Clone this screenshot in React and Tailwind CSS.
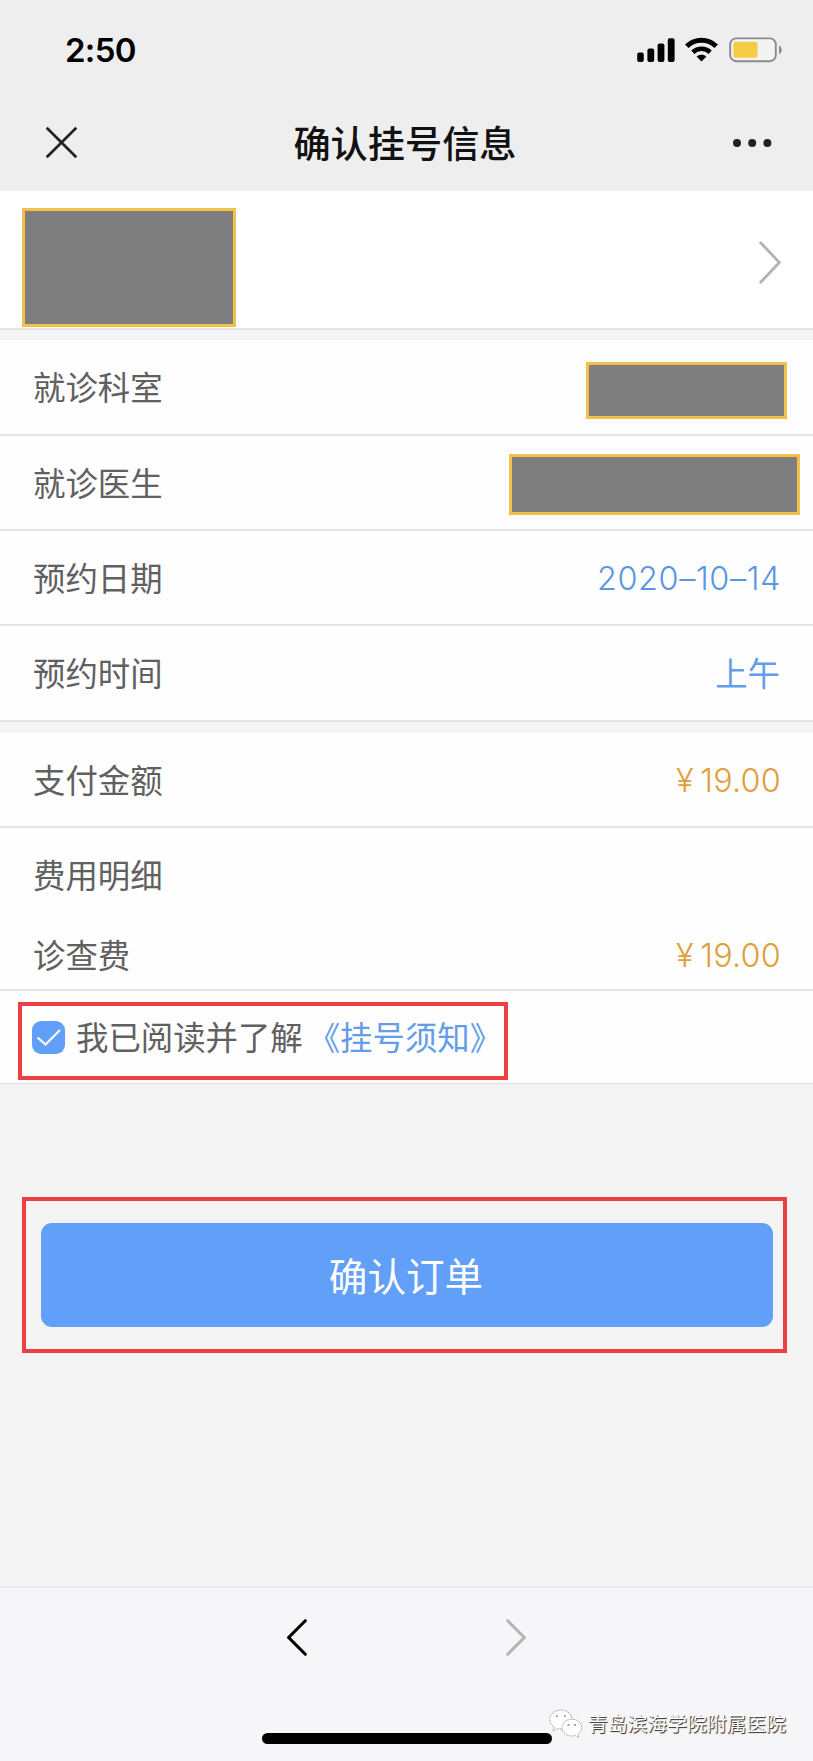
import clsx from "clsx";

// ===== Status Bar =====
const StatusBar = () => (
    <div className="h-[95px] flex items-start justify-between pl-[65px] pr-[31px] pt-[37px]">
        <span className="text-[33px] leading-[26px] font-semibold tracking-[-0.7px] text-black">2:50</span>
        <div className="flex items-start">
            <svg width="38" height="26" viewBox="0 0 38 26" fill="#000">
                <rect x="0.2" y="15.4" width="6.6" height="9.6" rx="2" />
                <rect x="10.4" y="11.4" width="6.8" height="13.6" rx="2" />
                <rect x="20.6" y="6.4" width="6.8" height="18.6" rx="2" />
                <rect x="30.8" y="1.2" width="6.8" height="23.8" rx="2" />
            </svg>
            <svg className="ml-[10px]" width="33" height="26" viewBox="0 0 33 26" fill="none" stroke="#000">
                <path d="M1.8 9.2C10 1.3 23 1.3 31.2 9.2" strokeWidth="5" />
                <path d="M7.8 15.2C12.8 10.6 20.2 10.6 25.2 15.2" strokeWidth="4.6" />
                <path d="M16.5 24.6L11.6 19.6C14.3 17.1 18.7 17.1 21.4 19.6Z" fill="#000" stroke="none" />
            </svg>
            <svg className="ml-[11px]" width="53" height="26" viewBox="0 0 53 26">
                <rect x="1.2" y="1.4" width="45.6" height="22.8" rx="6" fill="#f3f3f3" stroke="#8b8b8b" strokeWidth="1.9" />
                <rect x="4.4" y="4.8" width="24.2" height="16" rx="2.5" fill="#f6cb45" />
                <path d="M50 8.8C53.6 9.8 53.6 16 50 17Z" fill="#8b8b8b" />
            </svg>
        </div>
    </div>
);

// ===== Nav Bar =====
const NavBar = () => (
    <div className="h-24 flex items-center justify-between pl-[45px] pr-[41px]">
        <svg className="-mt-px" width="33" height="33" viewBox="0 0 33 33" fill="none" stroke="#222" strokeWidth="2.7">
            <path d="M1.7 1.7L31.3 31.3M31.3 1.7L1.7 31.3" />
        </svg>
        <h1 className="text-[37.2px] leading-[48px] font-medium text-[#111] pt-[3px]">确认挂号信息</h1>
        <svg width="40" height="10" viewBox="0 0 40 10" fill="#222">
            <circle cx="5" cy="5" r="4" />
            <circle cx="20.2" cy="5" r="4" />
            <circle cx="35.4" cy="5" r="4" />
        </svg>
    </div>
);

const Chevron = ({ className, flip, width, height, strokeWidth }) => (
    <svg
        className={clsx(className, flip && "-scale-x-100")}
        width={width}
        height={height}
        viewBox={`0 0 ${width} ${height}`}
        fill="none"
        stroke="currentColor"
        strokeWidth={strokeWidth}
        strokeLinecap="round"
    >
        <path d={`M1.7 1.7L${width - 1.7} ${height / 2}L1.7 ${height - 1.7}`} />
    </svg>
);

// Grey block that hides private data
const Masked = ({ className }) => (
    <div className={clsx("bg-[#7f7e7e] border-[3px] border-[#f5c04a]", className)} />
);

const Row = ({ label, children, className }) => (
    <div className={clsx("flex items-start justify-between pl-[33px] border-[#e4e4e4] bg-[#fefefe]", className)}>
        <span className="pt-[25px]">{label}</span>
        {children}
    </div>
);

const Price = ({ children }) => (
    <span className="flex pt-6 font-light tracking-[0.2px] text-[#df9f3e]">
        <span className="w-[29px] text-center mr-px">¥</span>
        {children}
    </span>
);

const WechatIcon = () => (
    <svg width="34" height="30" viewBox="0 0 34 30" fill="#fff" stroke="#8d8d8d" strokeWidth="0.7" strokeDasharray="2 0.8">
        <path d="M12 1C5.6 1 .8 5.2 .8 10.5C.8 13.6 2.5 16.3 5.2 18L3.9 21.8L8.3 19.6C9.5 19.9 10.7 20.1 12 20.1C18.3 20.1 23.2 15.8 23.2 10.5C23.2 5.2 18.3 1 12 1Z" />
        <path d="M22.8 10.2C17.3 10.2 13 14 13 18.7C13 23.4 17.3 27 22.8 27C24 27 25.1 26.8 26.1 26.5L29.8 28.5L28.8 25.3C31.2 23.7 32.7 21.3 32.7 18.7C32.7 14 28.4 10.2 22.8 10.2Z" />
        <path d="M7 7.5L9 6.8M15 6.8L17 7.5M18.5 16.2L20.5 15.6M25 15.6L27 16.2" stroke="#666" strokeWidth="1.1" fill="none" />
    </svg>
);

// ===== Page =====
const App = () => {
    return (
        <div
            lang="zh-CN"
            className="relative w-[813px] h-[1761px] flex flex-col overflow-hidden bg-[#f4f4f5] font-['Inter','Noto_Sans_CJK_SC',sans-serif] text-[32.4px] leading-[48px] text-[#606060]"
        >
            <header className="h-[191px] bg-[#eeeeee]">
                <StatusBar />
                <NavBar />
            </header>

            <section className="h-[139px] flex items-start justify-between pl-[22px] pr-[32px] bg-white border-b-2 border-[#e4e4e4]">
                <Masked className="w-[214px] h-[119px] mt-[17px]" />
                <Chevron className="mt-[50px] text-[#b2b2b2]" width={22} height={43} strokeWidth={2.8} />
            </section>

            <section className="mt-[10px]">
                <Row label="就诊科室" className="h-24 pr-[26px] border-b-2">
                    <Masked className="w-[201px] h-[57px] mt-[22px]" />
                </Row>
                <Row label="就诊医生" className="h-[95px] pr-[13px] border-b-2">
                    <Masked className="w-[291px] h-[61px] mt-[18px]" />
                </Row>
                <Row label="预约日期" className="h-[95px] pr-8 border-b-2">
                    <span className="pt-6 font-light tracking-[0.6px] text-[#5a96e6]">2020–10–14</span>
                </Row>
                <Row label="预约时间" className="h-24 pr-[33px] border-b-2">
                    <span className="pt-[25px] text-[#639de9]">上午</span>
                </Row>
            </section>

            <section className="mt-[11px]">
                <Row label="支付金额" className="h-[95px] pr-8 border-b-2">
                    <Price>19.00</Price>
                </Row>
                <Row label="费用明细" className="h-20" />
                <Row label="诊查费" className="h-[83px] pr-8 border-b-2">
                    <Price>19.00</Price>
                </Row>
                <div className="h-[93px] pt-[11px] pl-[18px] bg-[#fefefe] border-b border-[#dfdfdf]">
                    <label className="w-[490px] h-[78px] flex items-start border-4 border-[#ef3f42] pl-[10px] pt-[9px]">
                        <span className="shrink-0 w-[33px] h-[33px] mt-[6px] rounded-[9px] bg-[#629ff8] flex items-center justify-center">
                            <svg width="26" height="20" viewBox="0 0 26 20" fill="none" stroke="#fff" strokeWidth="2.2">
                                <path d="M1.5 9.5L9.5 16.5L24 2" />
                            </svg>
                        </span>
                        <span className="shrink-0 ml-[11px]">我已阅读并了解</span>
                        <a className="shrink-0 ml-[5px] text-[#639de9]">《挂号须知》</a>
                    </label>
                </div>
            </section>

            <div className="mt-[113px] ml-[22px] w-[765px] h-[156px] border-4 border-[#ef3f42] pl-[15px] pr-[10px] pt-[22px]">
                <button className="w-full h-[104px] pt-1 pr-[2px] rounded-[11px] bg-[#629ff8] text-white text-[38.6px]">
                    确认订单
                </button>
            </div>

            <footer className="mt-auto h-[175px] flex flex-col items-center bg-[#f6f6f8] border-t-2 border-[#ebebec]">
                <nav className="w-full flex pl-[287px] gap-[199px] pt-[31px]">
                    <Chevron className="text-black" flip width={20} height={37} strokeWidth={3} />
                    <Chevron className="text-[#b5b5b6]" width={20} height={37} strokeWidth={3} />
                </nav>
                <div className="w-[290px] h-[11px] mt-[77px] rounded-full bg-black" />
            </footer>

            {/* account watermark */}
            <div className="absolute left-[549px] top-[1709px] flex items-start">
                <WechatIcon />
                <span className="ml-[5px] text-[19.8px] leading-[30px] text-white [text-shadow:1px_1px_1px_#444,0.5px_0.5px_0_#555]">
                    青岛滨海学院附属医院
                </span>
            </div>
        </div>
    );
};

export default App;
